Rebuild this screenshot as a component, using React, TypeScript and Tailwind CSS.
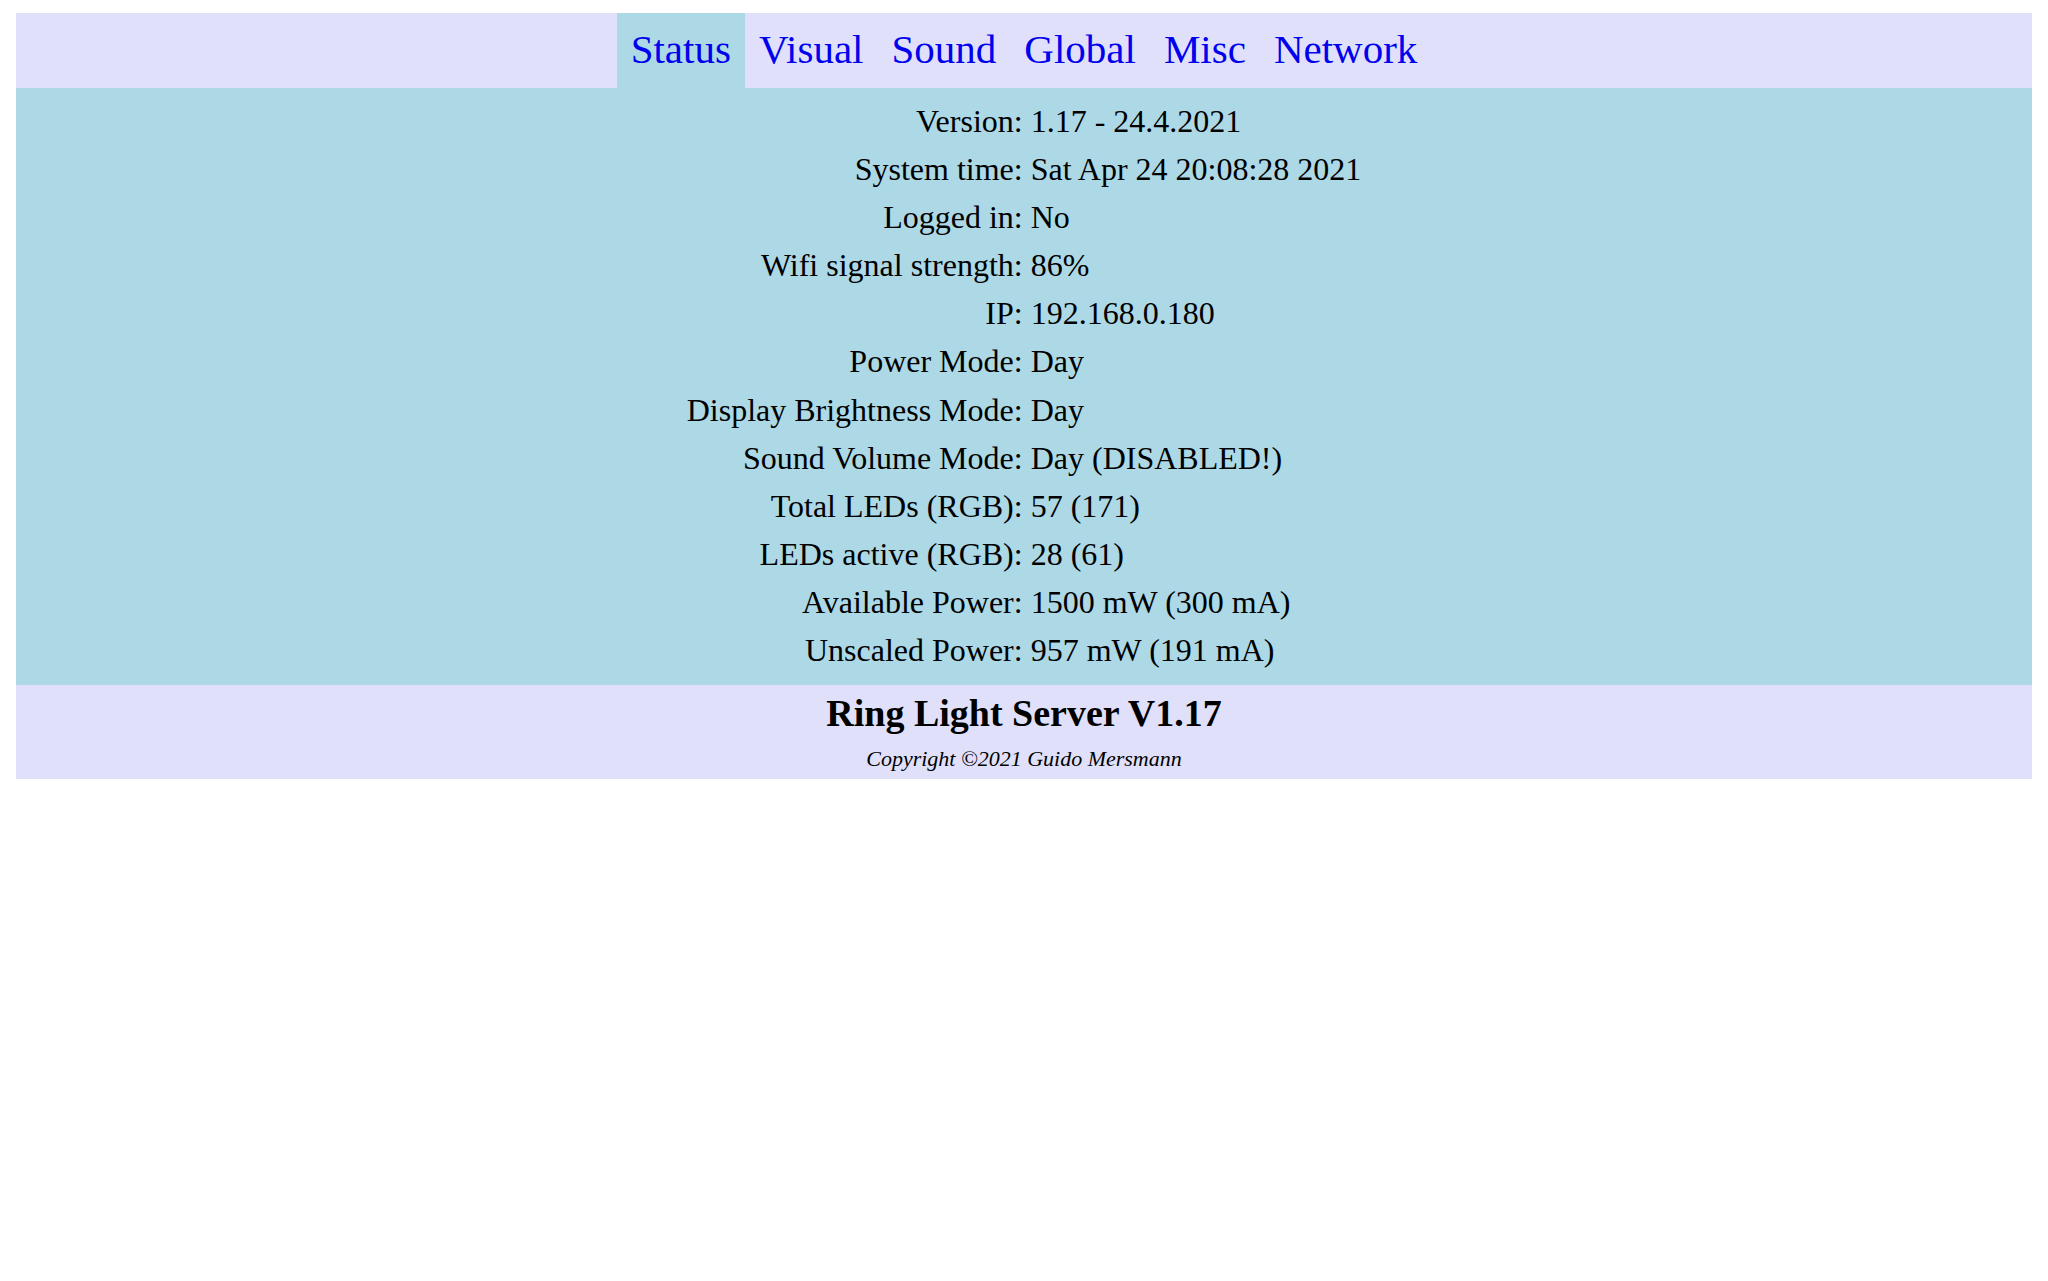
import React from "react";

const tabs = ["Status", "Visual", "Sound", "Global", "Misc", "Network"];

const rows: [string, string][] = [
  ["Version:", "1.17 - 24.4.2021"],
  ["System time:", "Sat Apr 24 20:08:28 2021"],
  ["Logged in:", "No"],
  ["Wifi signal strength:", "86%"],
  ["IP:", "192.168.0.180"],
  ["Power Mode:", "Day"],
  ["Display Brightness Mode:", "Day"],
  ["Sound Volume Mode:", "Day (DISABLED!)"],
  ["Total LEDs (RGB):", "57 (171)"],
  ["LEDs active (RGB):", "28 (61)"],
  ["Available Power:", "1500 mW (300 mA)"],
  ["Unscaled Power:", "957 mW (191 mA)"],
];

export default function App() {
  return (
    <div
      className="min-h-[1281px] bg-white px-[16px] pt-[13px] text-black"
      style={{ fontFamily: '"Liberation Serif", "Times New Roman", serif' }}
    >
      <nav className="flex h-[75px] justify-center bg-[#e0e0fb]">
        {tabs.map((t, i) => (
          <a
            key={t}
            href="#"
            className={
              "flex h-full items-center px-[14px] pb-[2px] text-[41px] leading-none text-[#0000ee] no-underline " +
              (i === 0 ? "bg-[#add8e6]" : "")
            }
          >
            {t}
          </a>
        ))}
      </nav>
      <main className="bg-[#add8e6] pb-[11px] pt-[9px]">
        <div className="mx-auto grid w-fit grid-cols-[auto_auto] gap-x-[8px] text-[32px] leading-[48.1px]">
          {rows.map(([k, v]) => (
            <React.Fragment key={k}>
              <div className="whitespace-nowrap text-right">{k}</div>
              <div className="whitespace-nowrap text-left">{v}</div>
            </React.Fragment>
          ))}
        </div>
      </main>
      <footer className="flex flex-col items-center bg-[#e0e0fb] pb-[8px] pt-[7px]">
        <h3 className="text-[38px] font-bold leading-[43px]">Ring Light Server V1.17</h3>
        <p className="mt-[11px] text-[22px] italic leading-[25px]">Copyright ©2021 Guido Mersmann</p>
      </footer>
    </div>
  );
}
